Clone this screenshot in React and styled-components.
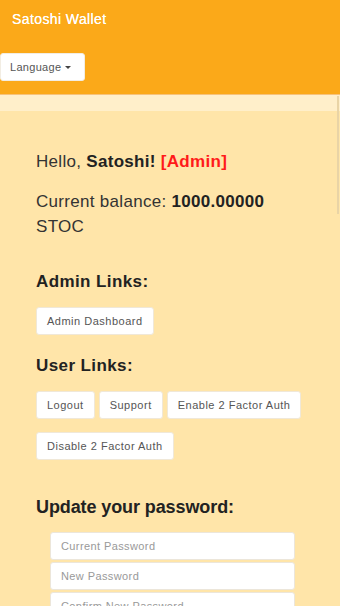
import React from 'react';
import styled, { createGlobalStyle } from 'styled-components';

const GlobalStyle = createGlobalStyle`
    html, body {
        margin: 0;
        padding: 0;
        background: #ffe5a9;
        font-family: 'Liberation Sans', Arial, sans-serif;
        color: #333;
    }
`;

const Page = styled.div`
    position: relative;
    width: 340px;
    height: 606px;
    overflow: hidden;
    background: #ffe5a9;
`;

const Header = styled.header`
    background: #fba919;
    height: 95px;
    border-bottom: 1px solid #f7c27a;
    box-sizing: border-box;
`;

const Brand = styled.div`
    color: #fff;
    font-size: 14px;
    line-height: 38px;
    padding-left: 12px;
    letter-spacing: 0.4px;
    text-shadow: 0 0 0.4px #fff;
`;

const LangButton = styled.button`
    margin-top: 15px;
    height: 28px;
    width: 85px;
    padding: 0 9px;
    border: 1px solid #f2ede3;
    border-radius: 3px;
    background: #fff;
    color: #555;
    font-family: inherit;
    font-size: 11px;
    display: flex;
    align-items: center;
    gap: 4px;
    letter-spacing: 0.3px;
`;

const Caret = styled.span`
    width: 0;
    height: 0;
    border-left: 3px solid transparent;
    border-right: 3px solid transparent;
    border-top: 3px solid #444;
`;

const Band = styled.div`
    height: 16px;
    background: #ffefca;
`;

const Content = styled.main`
    padding: 0 0 40px 36px;
`;

const Para = styled.p`
    margin: ${(p) => p.top}px 0 0;
    font-size: 17px;
    line-height: 25px;
    letter-spacing: 0.3px;
    color: #333;
    width: 260px;
`;

const Strong = styled.b`
    color: #222;
`;

const Admin = styled.b`
    color: #ff1a1a;
`;

const Heading = styled.h3`
    margin: ${(p) => p.top}px 0 0;
    font-size: ${(p) => p.size}px;
    line-height: ${(p) => p.size + 7}px;
    letter-spacing: ${(p) => p.spacing}px;
    font-weight: 700;
    color: #222;
`;

const BtnRow = styled.div`
    display: flex;
    flex-wrap: wrap;
    gap: 13px 4px;
    margin-top: 13px;
    width: 280px;
`;

const Btn = styled.button`
    height: 28px;
    padding: 0 10px;
    border: 1px solid #f0e8d8;
    border-radius: 3px;
    background: #fff;
    color: #555;
    font-family: inherit;
    font-size: 11px;
    letter-spacing: 0.5px;
`;

const Form = styled.form`
    margin: 12px 0 0 14px;
    display: flex;
    flex-direction: column;
    gap: 2px;
`;

const Input = styled.input`
    width: 245px;
    height: 28px;
    box-sizing: border-box;
    padding: 0 10px;
    border: 1px solid #ece6da;
    border-radius: 3px;
    background: #fff;
    font-family: inherit;
    font-size: 11px;
    letter-spacing: 0.4px;
    &::placeholder {
        color: #999;
    }
`;

const Scroll = styled.div`
    position: absolute;
    right: 1px;
    top: 96px;
    width: 2px;
    height: 118px;
    background: #e9d4a6;
`;

const App = () => {
    return (
        <Page>
            <GlobalStyle />
            <Header>
                <Brand>Satoshi Wallet</Brand>
                <LangButton>
                    Language <Caret />
                </LangButton>
            </Header>
            <Band />
            <Content>
                <Para top={38}>
                    Hello, <Strong>Satoshi!</Strong> <Admin>[Admin]</Admin>
                </Para>
                <Para top={15}>
                    Current balance: <Strong>1000.00000</Strong> STOC
                </Para>
                <Heading size={17} spacing={0.4} top={31}>Admin Links:</Heading>
                <BtnRow>
                    <Btn>Admin Dashboard</Btn>
                </BtnRow>
                <Heading size={17} spacing={0.4} top={19}>User Links:</Heading>
                <BtnRow>
                    <Btn>Logout</Btn>
                    <Btn>Support</Btn>
                    <Btn>Enable 2 Factor Auth</Btn>
                    <Btn>Disable 2 Factor Auth</Btn>
                </BtnRow>
                <Heading size={18} spacing={-0.1} top={35}>Update your password:</Heading>
                <Form>
                    <Input type="password" placeholder="Current Password" />
                    <Input type="password" placeholder="New Password" />
                    <Input type="password" placeholder="Confirm New Password" />
                </Form>
            </Content>
            <Scroll />
        </Page>
    );
};

export default App;
